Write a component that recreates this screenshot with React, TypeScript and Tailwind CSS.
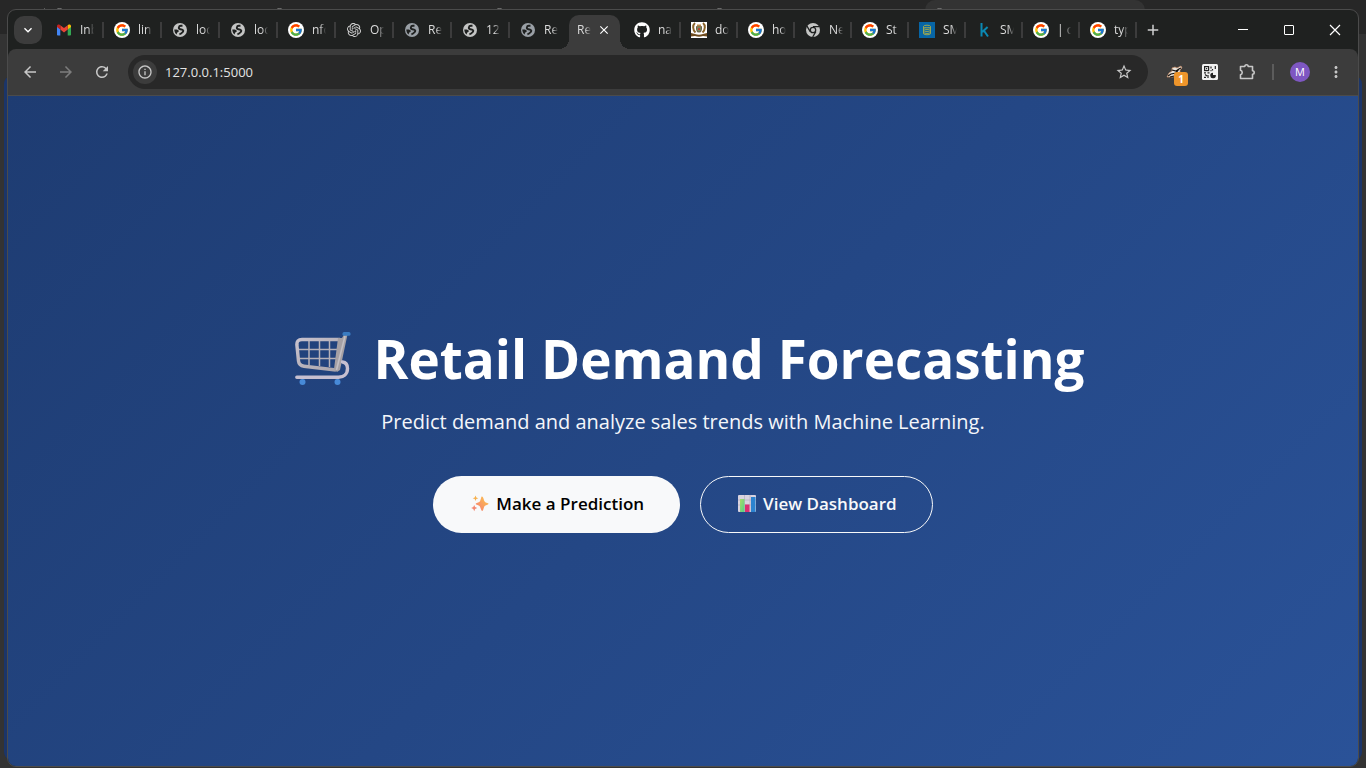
import type { ReactNode } from "react";
import { FcGoogle } from "react-icons/fc";
import { FaGithub } from "react-icons/fa";
import { SiOpenai } from "react-icons/si";
import {
  MdArrowBack,
  MdArrowForward,
  MdRefresh,
  MdInfoOutline,
  MdStarBorder,
  MdMoreVert,
  MdAdd,
  MdClose,
  MdKeyboardArrowDown,
} from "react-icons/md";

function GmailIcon() {
  return (
    <svg viewBox="0 0 16 16" className="size-4">
      <path d="M1 4v8.600q0 .9.900.9H4.300V7.200z" fill="#4285f4" />
      <path d="M15 4v8.600q0 .9-.9.900H11.700V7.200z" fill="#34a853" />
      <path d="M11.700 3.300v4.300L15 5.100V4.100c0-1.500-1.600-2-2.600-1.300z" fill="#fbbc04" />
      <path d="M4.300 7.600V3.300L8 6.100l3.700-2.800v4.300L8 10.400z" fill="#ea4335" />
      <path d="M1 4.100v1l3.300 2.500V3.300l-.7-.5C2.600 2.100 1 2.600 1 4.100z" fill="#c5221f" />
    </svg>
  );
}

function GoogleIcon() {
  return (
    <span className="flex size-4 items-center justify-center rounded-full bg-white">
      <FcGoogle className="size-[14px]" />
    </span>
  );
}

function GlobeIcon({ color }: { color: string }) {
  return (
    <svg viewBox="0 0 16 16" className="size-4">
      <circle cx="8" cy="8" r="7" fill={color} />
      <path
        d="M10.500 3.800H8.800C6.600 3.800 6 6.800 8.300 7.200c2.600.4 3.600 1.300 2.700 2.500-.8 1-1.600 2.300-3.600 2.600"
        fill="none"
        stroke="#1f2120"
        strokeWidth="1.900"
      />
      <path d="M2.300 7.500c2.500-.3 4.700.3 4.500 1.800-.1 1.100-1.800.8-1.900 1.900L4.800 12.600C3.200 11.600 2.300 9.600 2.300 7.500z" fill="#1f2120" />
    </svg>
  );
}

function ChromeIcon() {
  return (
    <svg viewBox="0 0 16 16" className="size-4">
      <circle cx="8" cy="8" r="7" fill="#c4c5c4" />
      <circle cx="8" cy="8" r="2.700" fill="none" stroke="#1f2120" strokeWidth="1.300" />
      <path
        d="M8 4.700h6.300M5.200 9.600 2 4.200M10.800 9.600 7.700 15"
        stroke="#1f2120"
        strokeWidth="1.300"
        fill="none"
      />
    </svg>
  );
}

function EmblemIcon() {
  return (
    <svg viewBox="0 0 16 16" className="size-4">
      <rect width="16" height="16" fill="#fff" />
      <path d="M4 1C1.500 3 1.500 8 4.500 10.500M12 1c2.500 2 2.500 7-.5 9.500" stroke="#8a6328" strokeWidth="2" fill="none" />
      <path d="M5.500 4.500h5v3l-1 2.500h-3l-1-2.500z" fill="#78865c" stroke="#5a4630" strokeWidth=".8" />
      <path d="M6 2.500h4v2H6z" fill="#b8894a" />
      <path d="M7 6h2v2H7z" fill="#b8442f" />
      <path d="M0 11l4 1q4 1.300 8 0l4-1v3.500l-4-.5q-4 1.500-8 0l-4 .5z" fill="#6e4b1e" />
    </svg>
  );
}

function DatabaseIcon() {
  return (
    <svg viewBox="0 0 16 16" className="size-4">
      <rect width="16" height="16" fill="#0765a5" />
      <g fill="none" stroke="#9aa653" strokeWidth="1">
        <ellipse cx="8" cy="4.500" rx="3.500" ry="1.300" />
        <path d="M4.500 6.500c1.400 1.300 5.600 1.300 7 0M4.500 8.500c1.400 1.300 5.600 1.300 7 0M4.500 10.500c1.400 1.300 5.600 1.300 7 0M4.500 4.500v7.300c1.400 1.300 5.600 1.300 7 0V4.500" />
      </g>
    </svg>
  );
}

function KaggleIcon() {
  return (
    <svg viewBox="0 0 16 16" className="size-4">
      <path d="M5.500 1v13.500M11.600 5 6.300 10M8 8.700l4 5.800" stroke="#0b89b3" strokeWidth="2" fill="none" />
    </svg>
  );
}

function MaximizeIcon() {
  return (
    <svg viewBox="0 0 12 12" className="size-3">
      <rect x="1.500" y="1.500" width="9" height="9" rx=".5" fill="none" stroke="#fff" />
    </svg>
  );
}

function ReaderIcon() {
  return (
    <svg viewBox="0 0 18 16" className="h-4 w-[18px]">
      <path d="M1 13 3 9l3-2 0-3 3-1 2 1 4-2 1 2-2 2 0 3-3 2-4 2z" fill="#e8e3dc" stroke="#c48a63" strokeWidth=".7" />
      <path d="M2 12l3-2 5-1 3-4 2-1M6 6l4 1 3-2M4 13l4-1" stroke="#15120f" strokeWidth="1.200" fill="none" />
    </svg>
  );
}

function QrIcon() {
  return (
    <svg viewBox="0 0 16 16" className="size-4">
      <rect width="16" height="16" rx="1.500" fill="#f1f1f1" />
      <g fill="none" stroke="#222" strokeWidth="1.200">
        <rect x="2.600" y="2.600" width="4" height="4" />
        <path d="M9 2.500v2M10.500 5v1.500M13.300 2v3M8.500 6.700h1M2 8.800h2M5.500 8.800h2M3 10.500l2 1.500M2 13.400h2M6 11v3" />
      </g>
      <path d="M4 4h1.200v1.200H4zM11 8.700v2.300h2.800a2.800 2.800 0 1 1-2.800-2.300z" fill="#222" />
    </svg>
  );
}

function PuzzleIcon() {
  return (
    <svg viewBox="0 0 18 18" className="size-[18px]">
      <path
        d="M2.500 3.500h4.300a1.700 1.700 0 0 1 3.400 0h4.300v4.300a1.700 1.700 0 0 1 0 3.400v4.300h-12v-3.700a2.400 2.400 0 0 0 0-4.600z"
        fill="none"
        stroke="currentColor"
        strokeWidth="1.600"
        strokeLinejoin="round"
      />
    </svg>
  );
}

function CartIcon() {
  return (
    <svg viewBox="0 0 56 54" className="h-[54px] w-14 shrink-0">
      <defs>
        <linearGradient id="cart-frame" x1="0" y1="0" x2="1" y2="1">
          <stop offset="0" stopColor="#c7c1cd" />
          <stop offset="1" stopColor="#a9a4aa" />
        </linearGradient>
      </defs>
      <path d="M14 7v26M24.500 7v27M34.500 7v28M2 17.500h42M3 26.500h39" stroke="#b5b0b8" strokeWidth="1.500" fill="none" />
      <path
        d="M45 7.500H7Q1.500 7.500 1.900 13L3.500 29Q4 33.500 9 34.200L41 38"
        stroke="url(#cart-frame)"
        strokeWidth="3.400"
        fill="none"
        strokeLinejoin="round"
      />
      <path d="M43 6h4l2-3.500h3.500L45 38l-3 2-3-3z" fill="#a5a0a4" />
      <path d="M50 4 41.500 38" stroke="#c3bfc4" strokeWidth="1.500" />
      <path d="M47.500 30c3.500.5 5 3 5 6.500 0 5.500-4 8.700-9 8.700H1.800" stroke="#c6bfd0" strokeWidth="3.400" fill="none" strokeLinecap="round" />
      <rect x="47.500" y="0" width="8" height="3.800" rx="1.500" fill="#397bc1" />
      <circle cx="7.500" cy="50" r="3" fill="#478ad8" />
      <circle cx="42.500" cy="50" r="3" fill="#478ad8" />
    </svg>
  );
}

function SparklesIcon() {
  return (
    <svg viewBox="0 0 18 18" className="size-[18px]">
      <defs>
        <linearGradient id="spark" x1="0" y1="1" x2="1" y2="0">
          <stop offset=".2" stopColor="#f78a6c" />
          <stop offset="1" stopColor="#fcc84a" />
        </linearGradient>
      </defs>
      <path d="M11 1.500q.9 0 1.300 1.500l1 3q.4 1 1.400 1.400l2.300.8q1 .5 0 1.300l-2.500 1q-1 .4-1.400 1.500l-1 3q-1 2-1.800 0l-1.200-3q-.4-1-1.400-1.400l-2.500-1q-1-.7 0-1.300l2.500-1q1-.4 1.400-1.400l1-3Q10.200 1.500 11 1.500z" fill="url(#spark)" />
      <path d="M4.500.5 5.300 2.500 7.300 3.300 5.300 4.100 4.500 6 3.700 4.100 1.700 3.300 3.700 2.500z" fill="#f6b04d" />
      <path d="M3.200 10 4.100 12.100 6.200 13 4.100 13.900 3.200 16.200 2.300 13.900.2 13 2.300 12.100z" fill="#f48770" />
    </svg>
  );
}

function ChartIcon() {
  return (
    <svg viewBox="0 0 18 18" className="size-[18px]">
      <defs>
        <linearGradient id="bar-green" x1="0" y1="0" x2="1" y2="1">
          <stop offset="0" stopColor="#a7dc68" />
          <stop offset="1" stopColor="#55cf87" />
        </linearGradient>
      </defs>
      <rect width="18" height="17" rx="1" fill="#d9d3df" />
      <path d="M0 5h18M0 10h18M6.500 0v17M12 0v17" stroke="#b5adbe" strokeWidth=".7" />
      <rect x="2" y="4" width="4.500" height="13" fill="url(#bar-green)" />
      <rect x="7" y="9.500" width="4.500" height="7.500" fill="#db2f72" />
      <rect x="13" y="2" width="4.500" height="15" fill="#2c83cf" />
    </svg>
  );
}

interface Tab {
  icon: ReactNode;
  label: string;
}

const leftTabs: Tab[] = [
  { icon: <GmailIcon />, label: "Inb" },
  { icon: <GoogleIcon />, label: "lin" },
  { icon: <GlobeIcon color="#c4c5c4" />, label: "loc" },
  { icon: <GlobeIcon color="#c4c5c4" />, label: "loc" },
  { icon: <GoogleIcon />, label: "nfc" },
  { icon: <SiOpenai className="size-[14px] text-[#d5d5d5]" />, label: "Op" },
  { icon: <GlobeIcon color="#9aa0a6" />, label: "Re" },
  { icon: <GlobeIcon color="#c4c5c4" />, label: "12" },
  { icon: <GlobeIcon color="#9aa0a6" />, label: "Re" },
];

const rightTabs: Tab[] = [
  { icon: <FaGithub className="size-4 text-white" />, label: "na" },
  { icon: <EmblemIcon />, label: "do" },
  { icon: <GoogleIcon />, label: "ho" },
  { icon: <ChromeIcon />, label: "Ne" },
  { icon: <GoogleIcon />, label: "St" },
  { icon: <DatabaseIcon />, label: "SM" },
  { icon: <KaggleIcon />, label: "SM" },
  { icon: <GoogleIcon />, label: "| c" },
  { icon: <GoogleIcon />, label: "typ" },
];

const fade = "whitespace-nowrap [mask-image:linear-gradient(to_right,#000_8px,transparent_14px)]";

function TabButton({ tab, divider, narrow }: { tab: Tab; divider: boolean; narrow?: boolean }) {
  return (
    <button className={`flex h-full items-center pl-[10px] ${narrow ? "w-[57px]" : "w-[58px]"}`}>
      <span className="flex size-4 shrink-0 items-center justify-center">{tab.icon}</span>
      <span className={`ml-2 w-5 text-left ${fade}`}>{tab.label}</span>
      {divider && <span className="ml-auto h-4 w-[2px] bg-[#3c3c3c]" />}
    </button>
  );
}

function TabStrip() {
  return (
    <div className="flex h-[39px] items-center text-[12px] text-[#dcdcdc]">
      <button aria-label="Search tabs" className="ml-[6px] flex size-7 items-center justify-center rounded-[10px] bg-[#3c3c3c]">
        <MdKeyboardArrowDown className="size-4 text-white" />
      </button>
      <nav aria-label="Tabs" className="ml-1 flex h-full items-center">
        {leftTabs.map((tab, i) => (
          <TabButton key={i} tab={tab} divider={i < leftTabs.length - 1} />
        ))}
        <div className="relative mt-[5px] ml-px flex h-[34px] w-[51px] items-center rounded-t-[10px] bg-[#3c3c3c] pb-[5px] pl-2">
          <span className="absolute bottom-0 -left-[10px] size-[10px] bg-[radial-gradient(circle_at_0_0,transparent_10px,#3c3c3c_10px)]" />
          <span className="absolute -right-[10px] bottom-0 size-[10px] bg-[radial-gradient(circle_at_100%_0,transparent_10px,#3c3c3c_10px)]" />
          <span className={`w-4 ${fade}`}>Re</span>
          <button aria-label="Close tab" className="ml-[3px] flex size-4 items-center justify-center">
            <MdClose className="size-[14px] text-white" />
          </button>
        </div>
        <div className="ml-1 flex h-full">
          {rightTabs.map((tab, i) => (
            <TabButton key={i} tab={tab} divider narrow />
          ))}
        </div>
      </nav>
      <button aria-label="New tab" className="ml-[7px] flex size-[18px] items-center justify-center">
        <MdAdd className="size-[18px] text-[#d0d0d0]" />
      </button>
      <div className="ml-auto flex h-full">
        <button aria-label="Minimize" className="flex w-[46px] items-center justify-center">
          <span className="h-px w-[10px] bg-white" />
        </button>
        <button aria-label="Maximize" className="flex w-[46px] items-center justify-center">
          <MaximizeIcon />
        </button>
        <button aria-label="Close window" className="flex w-[46px] items-center justify-center">
          <svg viewBox="0 0 12 12" className="size-3">
            <path d="M1 1l10 10M11 1L1 11" stroke="#fff" strokeWidth="1.200" />
          </svg>
        </button>
      </div>
    </div>
  );
}

function Toolbar() {
  return (
    <div className="flex h-[47px] items-center rounded-t-[8px] border-b border-[#4b4b4b] bg-[#3c3c3c] pr-[13px] pl-[13px] text-[#c7c7c7]">
      <button aria-label="Back">
        <MdArrowBack className="size-[18px]" />
      </button>
      <button aria-label="Forward" className="ml-[18px] text-[#7d7d7d]">
        <MdArrowForward className="size-[18px]" />
      </button>
      <button aria-label="Reload" className="ml-[18px]">
        <MdRefresh className="size-[18px]" />
      </button>
      <div className="ml-[17px] flex h-[34px] min-w-0 flex-1 items-center rounded-full bg-[#282828] px-[5px]">
        <button aria-label="Site information" className="flex size-6 shrink-0 items-center justify-center rounded-full bg-[#3c3c3c]">
          <MdInfoOutline className="size-4" />
        </button>
        <input
          aria-label="Address"
          defaultValue="127.0.0.1:5000"
          className="ml-2 min-w-0 flex-1 bg-transparent pt-px text-[13px] text-[#e3e3e3] outline-none"
        />
        <button aria-label="Bookmark" className="mr-[10px]">
          <MdStarBorder className="size-[18px]" />
        </button>
      </div>
      <button aria-label="Reader extension, 1 notification" className="relative ml-[18px]">
        <ReaderIcon />
        <span className="absolute -right-1 -bottom-[6px] flex size-[14px] items-center justify-center rounded-[3px] bg-[#ee952b] text-[10px] font-bold text-white">
          1
        </span>
      </button>
      <button aria-label="QR code" className="ml-[18px]">
        <QrIcon />
      </button>
      <button aria-label="Extensions" className="ml-5">
        <PuzzleIcon />
      </button>
      <span className="ml-4 h-4 w-[2px] bg-[#5c5c5c]" />
      <button aria-label="Profile" className="ml-4 flex size-5 items-center justify-center rounded-full bg-[#7e57c2] text-[11px] text-white">
        M
      </button>
      <button aria-label="Menu" className="ml-[17px]">
        <MdMoreVert className="size-[18px]" />
      </button>
    </div>
  );
}

function Hero() {
  return (
    <main className="flex flex-1 flex-col items-center justify-center bg-linear-135 from-[#1e3c72] to-[#2a5298] pb-1 text-center text-white">
      <h1 className="flex items-center gap-[22px] pl-[14px] text-[53px] leading-[66px] font-bold">
        <CartIcon />
        Retail Demand Forecasting
      </h1>
      <p className="mt-[14px] text-[20px] leading-8 text-[#f4f6fa]">
        Predict demand and analyze sales trends with Machine Learning.
      </p>
      <div className="mt-[38px] flex gap-5 text-[17px] font-semibold">
        <a href="#predict" className="flex h-[57px] items-center gap-[7px] rounded-full bg-[#f8f9fa] pr-9 pl-[38px] text-black">
          <SparklesIcon />
          Make a Prediction
        </a>
        <a href="#dashboard" className="flex h-[57px] items-center gap-[7px] rounded-full border border-[#f8f9fa] pr-[35px] pl-[37px] text-[#f8f9fa]">
          <ChartIcon />
          View Dashboard
        </a>
      </div>
    </main>
  );
}

const backdropTabs = [0, 1, 2, 3, 4];

function Backdrop() {
  return (
    <div aria-hidden="true" className="absolute inset-0 flex flex-col bg-[#333333]">
      <div className="flex h-[34px] bg-[#272727] pl-[44px]">
        <span className="mt-2 h-4 w-px bg-[#5c5c5c]" />
        {backdropTabs.map((n) => (
          <div
            key={n}
            className="flex h-full w-[220px] rounded-t-[10px] pt-2 pl-[9px] last-of-type:bg-[#333333]"
          >
            <span className="size-[11px] rounded-full border border-[#7a7a7a]" />
          </div>
        ))}
      </div>
      <div className="mx-1 mt-[42px] mb-2 flex-1 rounded-[8px] bg-[#1b3569]" />
    </div>
  );
}

export default function App() {
  return (
    <div className="relative flex min-h-screen flex-col font-['Open_Sans','Noto_Sans',sans-serif]">
      <Backdrop />
      <div className="relative mx-[7px] mt-[9px] mb-px flex flex-1 flex-col overflow-hidden rounded-[9px] border border-[#4b4b4b] bg-[#1f2120]">
        <TabStrip />
        <Toolbar />
        <Hero />
      </div>
    </div>
  );
}
